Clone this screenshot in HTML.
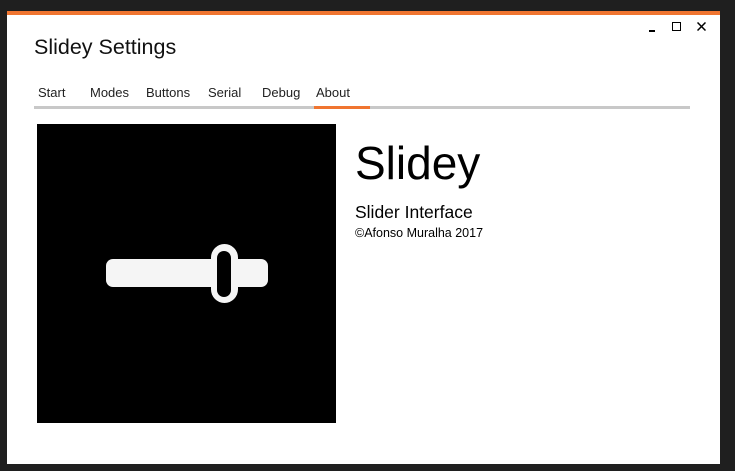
<!DOCTYPE html>
<html><head><style>
*{margin:0;padding:0;box-sizing:border-box}
body{width:735px;height:471px;background:#1f1f1f;position:relative;overflow:hidden;font-family:"Segoe UI","Liberation Sans","DejaVu Sans",sans-serif;color:#000}
.win{position:absolute;left:7px;top:11px;width:713px;height:453px;background:#fff}
.bar{position:absolute;left:7px;top:11px;width:713px;height:4px;background:#f07530}
.t{position:absolute;white-space:nowrap}
.tab{position:absolute;top:85px;font-size:13px;color:#222}
</style></head><body>
<div class="win"></div><div class="bar"></div>
<div class="t" style="left:649px;top:30px;width:6px;height:2px;background:#000"></div>
<div class="t" style="left:672px;top:22px;width:9px;height:9px;border:1.5px solid #000"></div>
<svg class="t" style="left:697px;top:22px" width="9" height="9"><path d="M0.5 0.5L8.5 8.5M8.5 0.5L0.5 8.5" stroke="#000" stroke-width="1.5"/></svg>
<div class="t" style="left:34px;top:35px;font-size:21.5px;font-weight:300;color:#111">Slidey Settings</div>
<div class="tab" style="left:38px">Start</div>
<div class="tab" style="left:90px">Modes</div>
<div class="tab" style="left:146px">Buttons</div>
<div class="tab" style="left:208px">Serial</div>
<div class="tab" style="left:262px">Debug</div>
<div class="tab" style="left:316px">About</div>
<div class="t" style="left:34px;top:106px;width:656px;height:3px;background:#c8c8c8"></div>
<div class="t" style="left:314px;top:106px;width:56px;height:3px;background:#f07530"></div>
<div class="t" style="left:37px;top:124px;width:299px;height:299px;background:#000"></div>
<svg class="t" style="left:37px;top:124px" width="299" height="299">
<rect x="69" y="135" width="162" height="28" rx="7" fill="#f5f5f5"/>
<rect x="174" y="120" width="27" height="59" rx="13.5" fill="#f5f5f5"/>
<rect x="180" y="127" width="14" height="46" rx="7" fill="#000"/>
</svg>
<div class="t" style="left:355px;top:133px;font-size:46px;font-weight:300;line-height:60px">Slidey</div>
<div class="t" style="left:355px;top:201px;font-size:17.5px;line-height:22px">Slider Interface</div>
<div class="t" style="left:355px;top:225px;font-size:12.5px;line-height:17px">©Afonso Muralha 2017</div>
</body></html>
